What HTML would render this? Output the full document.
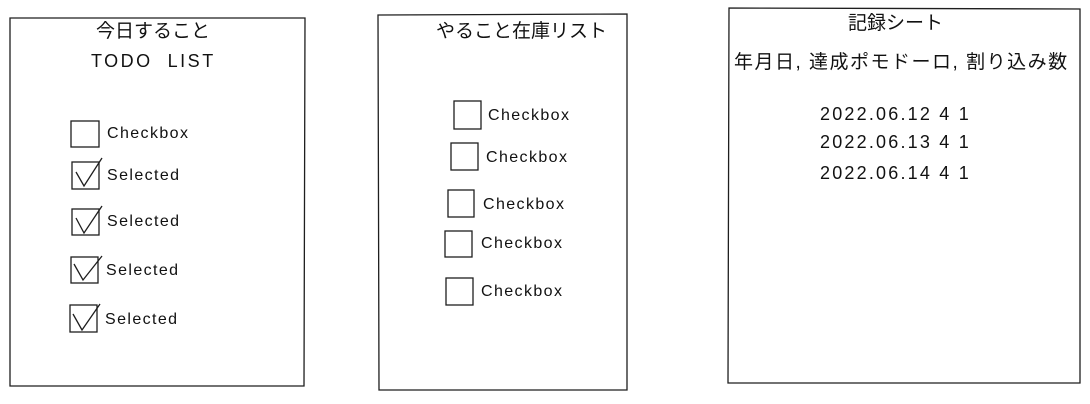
<!DOCTYPE html>
<html><head><meta charset="utf-8"><style>
body{margin:0;width:1090px;height:404px;background:#fff;overflow:hidden;position:relative;font-family:"Liberation Sans","Noto Sans CJK JP",sans-serif;color:#111}
.t{position:absolute;white-space:nowrap;line-height:1}
.j{font-size:19px}
.c{font-size:16px;letter-spacing:1.4px}
.d{font-size:18px;letter-spacing:2.2px}
</style></head><body>
<svg width="1090" height="404" style="position:absolute;left:0;top:0" fill="none" stroke="#1e1e1e" stroke-width="1.3">
<path d="M10 18 L305 18 L304 386 L10 386 Z"/>
<path d="M378 15 L627 14 L627 390 L379 390 Z"/>
<path d="M729 8 L1080 9 L1080 383 L728 383 Z"/>
<rect x="71" y="121" width="28" height="26"/>
<rect x="72" y="162" width="27" height="27"/><path d="M76 172 L84 186 L102 158"/>
<rect x="72" y="209" width="27" height="26"/><path d="M76 218 L84 233 L102 206"/>
<rect x="71" y="257" width="27" height="26"/><path d="M74 264 L83 280 L102 256"/>
<rect x="70" y="305" width="27" height="27"/><path d="M73 314 L82 330 L100 304"/>
<rect x="454" y="101" width="27" height="28"/>
<rect x="451" y="143" width="27" height="27"/>
<rect x="448" y="190" width="26" height="27"/>
<rect x="445" y="231" width="27" height="26"/>
<rect x="446" y="278" width="27" height="27"/>
</svg>
<div class="t j" style="left:96px;top:22px">今日すること</div>
<div class="t" style="left:91px;top:52px;font-size:18px;letter-spacing:2.5px">TODO&nbsp; LIST</div>
<div class="t c" style="left:107px;top:126px">Checkbox</div>
<div class="t c" style="left:107px;top:168px">Selected</div>
<div class="t c" style="left:107px;top:214px">Selected</div>
<div class="t c" style="left:106px;top:263px">Selected</div>
<div class="t c" style="left:105px;top:312px">Selected</div>
<div class="t j" style="left:436px;top:22px">やること在庫リスト</div>
<div class="t c" style="left:488px;top:108px">Checkbox</div>
<div class="t c" style="left:486px;top:150px">Checkbox</div>
<div class="t c" style="left:483px;top:197px">Checkbox</div>
<div class="t c" style="left:481px;top:236px">Checkbox</div>
<div class="t c" style="left:481px;top:284px">Checkbox</div>
<div class="t j" style="left:848px;top:14px">記録シート</div>
<div class="t j" style="left:734px;top:53px;letter-spacing:1.5px">年月日, 達成ポモドーロ, 割り込み数</div>
<div class="t d" style="left:820px;top:105px">2022.06.12 4 1</div>
<div class="t d" style="left:820px;top:133px">2022.06.13 4 1</div>
<div class="t d" style="left:820px;top:164px">2022.06.14 4 1</div>
</body></html>
